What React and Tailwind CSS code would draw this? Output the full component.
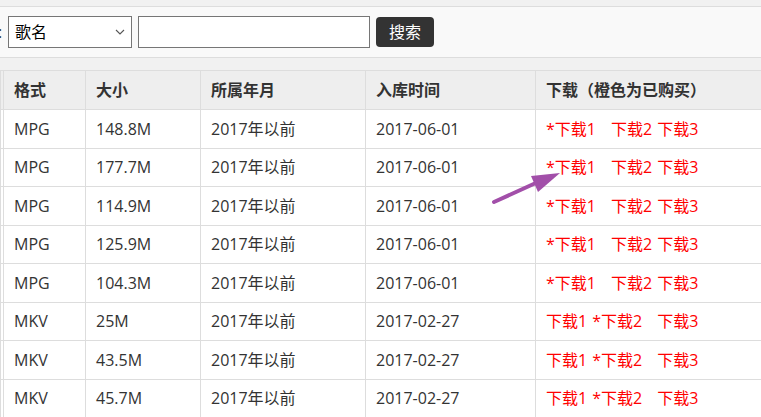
import React from 'react';

const rows = [
    { fmt: 'MPG', size: '148.8M', date: '2017-06-01', bought: 1 },
    { fmt: 'MPG', size: '177.7M', date: '2017-06-01', bought: 1 },
    { fmt: 'MPG', size: '114.9M', date: '2017-06-01', bought: 1 },
    { fmt: 'MPG', size: '125.9M', date: '2017-06-01', bought: 1 },
    { fmt: 'MPG', size: '104.3M', date: '2017-06-01', bought: 1 },
    { fmt: 'MKV', size: '25M', date: '2017-02-27', bought: 2 },
    { fmt: 'MKV', size: '43.5M', date: '2017-02-27', bought: 2 },
    { fmt: 'MKV', size: '45.7M', date: '2017-02-27', bought: 2 },
];

const td = 'border border-[#dddddd] px-[10px] align-middle';

const Links = ({ bought }) => (
    <div className="flex items-center text-[#ff0000] whitespace-nowrap">
        {[1, 2, 3].map((n) => (
            <span key={n} className={`${n === bought ? 'pr-[10px]' : ''} mr-[5px]`}>
                {n === bought ? '*' : ''}下载{n}
            </span>
        ))}
    </div>
);

export default function App() {
    return (
        <div
            className="relative w-[761px] h-[417px] overflow-hidden bg-[#f1f1f1] text-[16px] text-[#333333]"
            style={{ fontFamily: '"Open Sans", "Noto Sans CJK SC", sans-serif' }}
        >
            {/* search bar */}
            <div className="mt-[6px] h-[52px] border-y border-[#dddddd] bg-[#f9f9f9] flex items-center">
                <span className="w-[10px] -ml-[2px] leading-none">:</span>
                <div className="relative w-[124px] h-[32px] border border-[#767676] bg-white flex items-center pl-[6px] text-black">
                    歌名
                    <svg className="absolute right-[6px] top-[12px]" width="10" height="6" viewBox="0 0 10 6">
                        <path d="M1 1 L5 5 L9 1" fill="none" stroke="#555" strokeWidth="1.1" />
                    </svg>
                </div>
                <div className="ml-[6px] w-[232px] h-[32px] border border-[#767676] bg-white" />
                <button className="ml-[6px] w-[58px] h-[30px] rounded-[4px] bg-[#333333] text-white leading-none">
                    搜索
                </button>
            </div>

            {/* table */}
            <table className="mt-[12px] border-collapse table-fixed bg-white w-[1000px]">
                <colgroup>
                    <col className="w-[3px]" />
                    <col className="w-[82px]" />
                    <col className="w-[115px]" />
                    <col className="w-[165px]" />
                    <col className="w-[170px]" />
                    <col className="w-[465px]" />
                </colgroup>
                <thead>
                    <tr className="h-[39px] bg-[#eeeeee] font-bold text-left">
                        <th className="border border-[#dddddd]" />
                        <th className={td}>格式</th>
                        <th className={td}>大小</th>
                        <th className={td}>所属年月</th>
                        <th className={td}>入库时间</th>
                        <th className={td}>下载（橙色为已购买）</th>
                    </tr>
                </thead>
                <tbody>
                    {rows.map((r, i) => (
                        <tr key={i} className="h-[38.5px]">
                            <td className="border border-[#dddddd]" />
                            <td className={td}>{r.fmt}</td>
                            <td className={td}>{r.size}</td>
                            <td className={td}>2017年以前</td>
                            <td className={td}>{r.date}</td>
                            <td className={td}>
                                <Links bought={r.bought} />
                            </td>
                        </tr>
                    ))}
                </tbody>
            </table>

            {/* annotation arrow */}
            <svg className="absolute left-[488px] top-[168px]" width="76" height="40" viewBox="0 0 76 40">
                <line x1="6" y1="34" x2="50" y2="14" stroke="#a24fa9" strokeWidth="4" strokeLinecap="round" />
                <polygon points="72,5 43,8 50,24" fill="#a24fa9" />
            </svg>
        </div>
    );
}
